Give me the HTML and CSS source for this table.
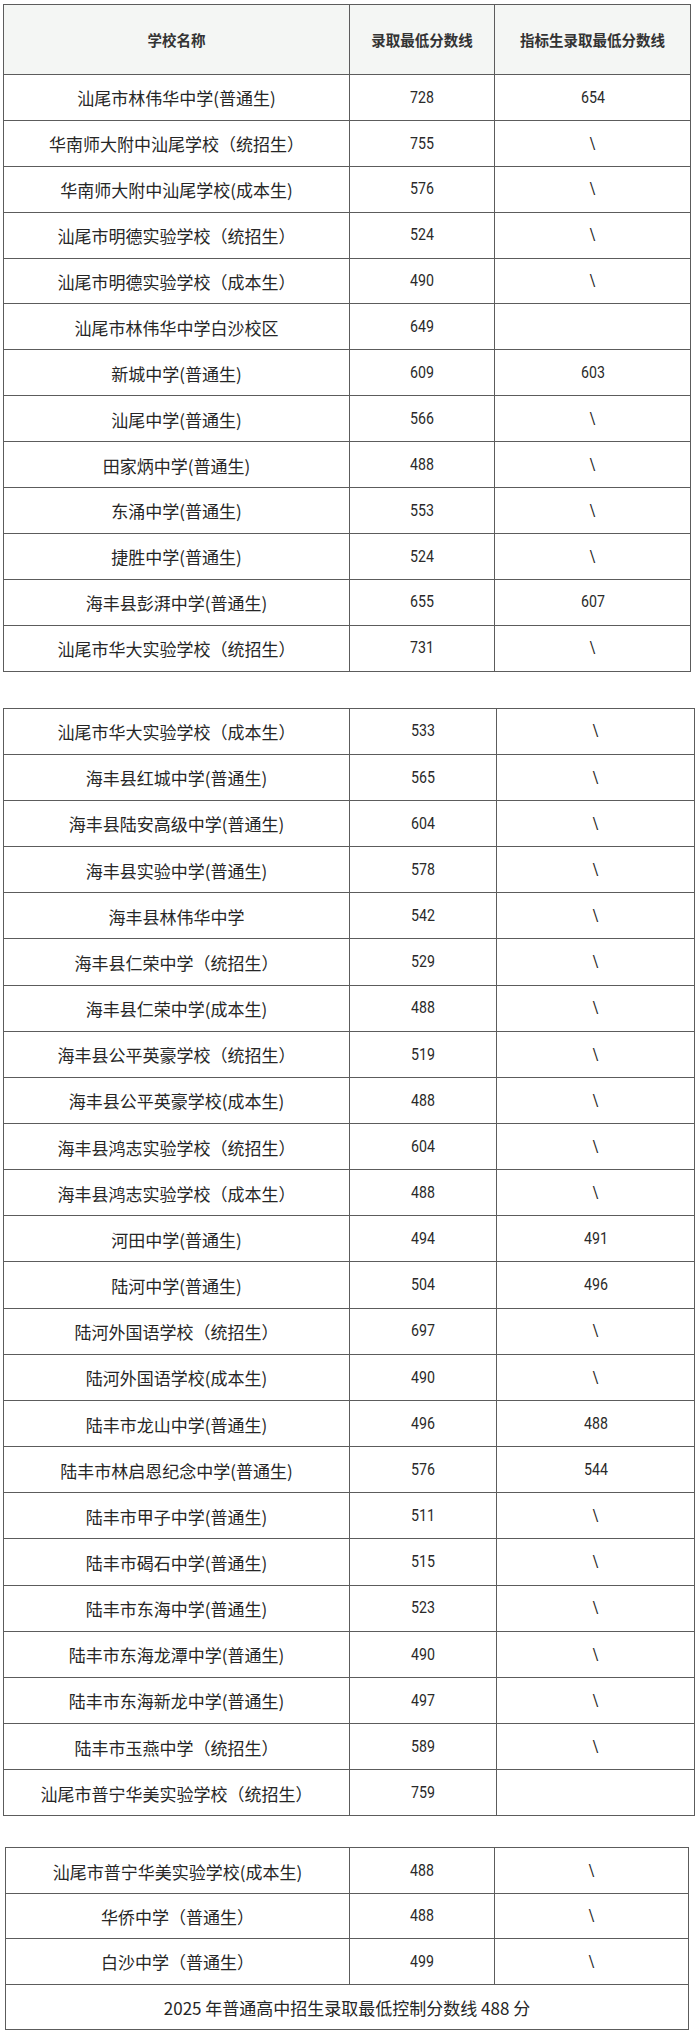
FILE: index.html
```html
<!DOCTYPE html>
<html lang="zh-CN">
<head>
<meta charset="utf-8">
<title>2025 汕尾普通高中录取分数线</title>
<link rel="stylesheet" href="styles.css">
</head>
<body>
<div class="page">
  <div class="tbl t1">
    <div class="cell head">学校名称</div>
    <div class="cell head">录取最低分数线</div>
    <div class="cell head">指标生录取最低分数线</div>

    <div class="cell">汕尾市林伟华中学(普通生)</div><div class="cell num"><span>728</span></div><div class="cell num"><span>654</span></div>
    <div class="cell">华南师大附中汕尾学校（统招生）</div><div class="cell num"><span>755</span></div><div class="cell num"><span>\</span></div>
    <div class="cell">华南师大附中汕尾学校(成本生)</div><div class="cell num"><span>576</span></div><div class="cell num"><span>\</span></div>
    <div class="cell">汕尾市明德实验学校（统招生）</div><div class="cell num"><span>524</span></div><div class="cell num"><span>\</span></div>
    <div class="cell">汕尾市明德实验学校（成本生）</div><div class="cell num"><span>490</span></div><div class="cell num"><span>\</span></div>
    <div class="cell">汕尾市林伟华中学白沙校区</div><div class="cell num"><span>649</span></div><div class="cell num"></div>
    <div class="cell">新城中学(普通生)</div><div class="cell num"><span>609</span></div><div class="cell num"><span>603</span></div>
    <div class="cell">汕尾中学(普通生)</div><div class="cell num"><span>566</span></div><div class="cell num"><span>\</span></div>
    <div class="cell">田家炳中学(普通生)</div><div class="cell num"><span>488</span></div><div class="cell num"><span>\</span></div>
    <div class="cell">东涌中学(普通生)</div><div class="cell num"><span>553</span></div><div class="cell num"><span>\</span></div>
    <div class="cell">捷胜中学(普通生)</div><div class="cell num"><span>524</span></div><div class="cell num"><span>\</span></div>
    <div class="cell">海丰县彭湃中学(普通生)</div><div class="cell num"><span>655</span></div><div class="cell num"><span>607</span></div>
    <div class="cell">汕尾市华大实验学校（统招生）</div><div class="cell num"><span>731</span></div><div class="cell num"><span>\</span></div>
  </div>

  <div class="tbl t2">
    <div class="cell">汕尾市华大实验学校（成本生）</div><div class="cell num"><span>533</span></div><div class="cell num"><span>\</span></div>
    <div class="cell">海丰县红城中学(普通生)</div><div class="cell num"><span>565</span></div><div class="cell num"><span>\</span></div>
    <div class="cell">海丰县陆安高级中学(普通生)</div><div class="cell num"><span>604</span></div><div class="cell num"><span>\</span></div>
    <div class="cell">海丰县实验中学(普通生)</div><div class="cell num"><span>578</span></div><div class="cell num"><span>\</span></div>
    <div class="cell">海丰县林伟华中学</div><div class="cell num"><span>542</span></div><div class="cell num"><span>\</span></div>
    <div class="cell">海丰县仁荣中学（统招生）</div><div class="cell num"><span>529</span></div><div class="cell num"><span>\</span></div>
    <div class="cell">海丰县仁荣中学(成本生)</div><div class="cell num"><span>488</span></div><div class="cell num"><span>\</span></div>
    <div class="cell">海丰县公平英豪学校（统招生）</div><div class="cell num"><span>519</span></div><div class="cell num"><span>\</span></div>
    <div class="cell">海丰县公平英豪学校(成本生)</div><div class="cell num"><span>488</span></div><div class="cell num"><span>\</span></div>
    <div class="cell">海丰县鸿志实验学校（统招生）</div><div class="cell num"><span>604</span></div><div class="cell num"><span>\</span></div>
    <div class="cell">海丰县鸿志实验学校（成本生）</div><div class="cell num"><span>488</span></div><div class="cell num"><span>\</span></div>
    <div class="cell">河田中学(普通生)</div><div class="cell num"><span>494</span></div><div class="cell num"><span>491</span></div>
    <div class="cell">陆河中学(普通生)</div><div class="cell num"><span>504</span></div><div class="cell num"><span>496</span></div>
    <div class="cell">陆河外国语学校（统招生）</div><div class="cell num"><span>697</span></div><div class="cell num"><span>\</span></div>
    <div class="cell">陆河外国语学校(成本生)</div><div class="cell num"><span>490</span></div><div class="cell num"><span>\</span></div>
    <div class="cell">陆丰市龙山中学(普通生)</div><div class="cell num"><span>496</span></div><div class="cell num"><span>488</span></div>
    <div class="cell">陆丰市林启恩纪念中学(普通生)</div><div class="cell num"><span>576</span></div><div class="cell num"><span>544</span></div>
    <div class="cell">陆丰市甲子中学(普通生)</div><div class="cell num"><span>511</span></div><div class="cell num"><span>\</span></div>
    <div class="cell">陆丰市碣石中学(普通生)</div><div class="cell num"><span>515</span></div><div class="cell num"><span>\</span></div>
    <div class="cell">陆丰市东海中学(普通生)</div><div class="cell num"><span>523</span></div><div class="cell num"><span>\</span></div>
    <div class="cell">陆丰市东海龙潭中学(普通生)</div><div class="cell num"><span>490</span></div><div class="cell num"><span>\</span></div>
    <div class="cell">陆丰市东海新龙中学(普通生)</div><div class="cell num"><span>497</span></div><div class="cell num"><span>\</span></div>
    <div class="cell">陆丰市玉燕中学（统招生）</div><div class="cell num"><span>589</span></div><div class="cell num"><span>\</span></div>
    <div class="cell">汕尾市普宁华美实验学校（统招生）</div><div class="cell num"><span>759</span></div><div class="cell num"></div>
  </div>

  <div class="tbl t3">
    <div class="cell">汕尾市普宁华美实验学校(成本生)</div><div class="cell num"><span>488</span></div><div class="cell num"><span>\</span></div>
    <div class="cell">华侨中学（普通生）</div><div class="cell num"><span>488</span></div><div class="cell num"><span>\</span></div>
    <div class="cell">白沙中学（普通生）</div><div class="cell num"><span>499</span></div><div class="cell num"><span>\</span></div>
    <div class="cell foot">2025 年普通高中招生录取最低控制分数线 488 分</div>
  </div>
</div>
</body>
</html>
```

FILE: styles.css
```css
* { box-sizing: border-box; }
html, body { margin: 0; padding: 0; background: #ffffff; }
body {
  font-family: "Noto Sans CJK SC", "Noto Sans", sans-serif;
  color: #262626;
}
.page { width: 700px; }

.tbl {
  display: grid;
  border-top: 1px solid #5c5c5c;
  border-left: 1px solid #5c5c5c;
}
.t1 {
  margin: 4px 0 0 3px;
  width: 688px;
  grid-template-columns: 346px 145px 196px;
  grid-auto-rows: 45.9px;
  grid-template-rows: 70px;
}
.t2 {
  margin: 36px 0 0 3px;
  width: 692px;
  grid-template-columns: 346px 147px 198px;
  grid-auto-rows: 46.17px;
}
.t3 {
  margin: 31px 0 0 5px;
  width: 684px;
  grid-template-columns: 344px 145px 194px;
  grid-auto-rows: 45.4px;
}

.cell {
  border-right: 1px solid #5c5c5c;
  border-bottom: 1px solid #5c5c5c;
  display: flex;
  align-items: center;
  justify-content: center;
  font-size: 17px;
  line-height: 1;
  white-space: nowrap;
  padding-top: 1px;
}
.head {
  background: #f4f6f4;
  font-size: 14.5px;
  font-weight: 700;
  color: #333333;
}
.num span {
  display: inline-block;
  font-family: Roboto, "Liberation Sans", sans-serif;
  font-size: 16.5px;
  transform: scaleX(0.86);
  color: #2a2a2a;
}
.foot {
  grid-column: 1 / -1;
  font-size: 17px;
}
```
